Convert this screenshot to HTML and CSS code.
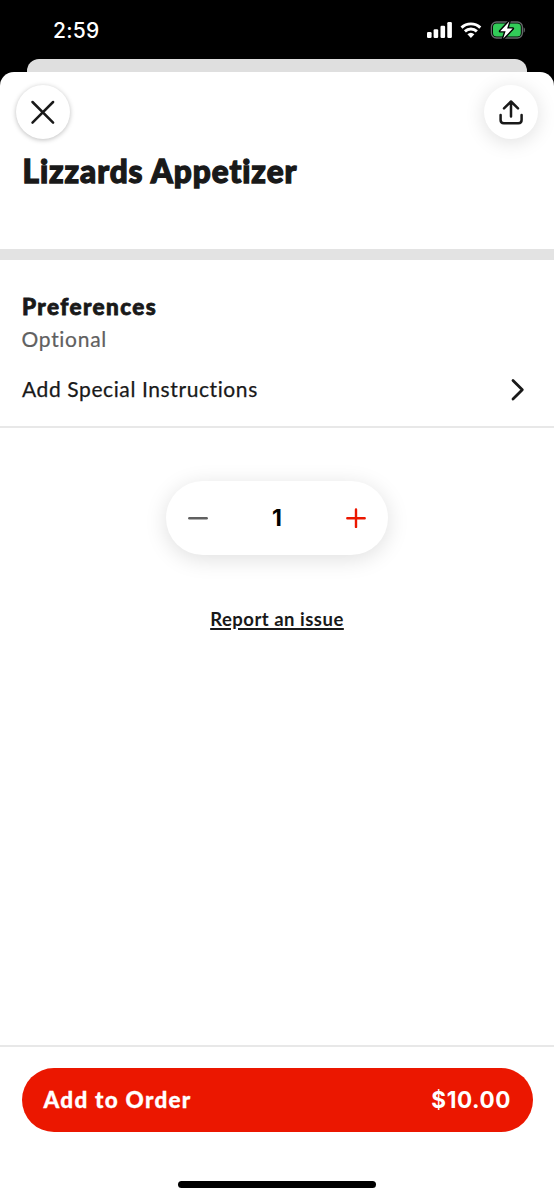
FILE: index.html
```html
<!DOCTYPE html>
<html lang="en">
<head>
<meta charset="utf-8">
<title>Lizzards Appetizer</title>
<link rel="stylesheet" href="styles.css">
</head>
<body>
<div class="screen">
  <header class="status">
    <span class="time">2:59</span>
    <svg class="status-icons" width="98" height="20" viewBox="0 0 98 20">
      <g fill="#fff">
        <rect x="0" y="11" width="4.6" height="6" rx="1.2"/>
        <rect x="6.6" y="8.2" width="4.6" height="8.8" rx="1.2"/>
        <rect x="13.5" y="4.8" width="4.6" height="12.2" rx="1.2"/>
        <rect x="20.3" y="1" width="4.6" height="16" rx="1.2"/>
      </g>
      <g fill="none" stroke="#fff" stroke-width="2.9">
        <path d="M34.5 6.6a13.6 13.6 0 0 1 18.8 0"/>
        <path d="M37.9 10.4a8.8 8.8 0 0 1 12 0"/>
      </g>
      <path d="M40.4 13.3a5.2 5.2 0 0 1 7 0l-3.5 3.6z" fill="#fff"/>
      <rect x="64.4" y="1" width="31" height="16" rx="5" fill="none" stroke="#65696b" stroke-width="1.3"/>
      <path d="M96.6 6.3c1.7.6 1.7 4.8 0 5.4z" fill="#65696b"/>
      <rect x="66" y="2.6" width="27.8" height="12.8" rx="3.5" fill="#32cb58"/>
      <path d="M82.3.4 73.2 10.2h5.4l-2.4 7.4 9.5-10h-5.6z" fill="#fff" stroke="#000" stroke-width="2.8" paint-order="stroke" stroke-linejoin="round"/>
    </svg>
  </header>
  <div class="back-card"></div>
  <main class="sheet">
    <div class="toolbar">
      <button class="round close" aria-label="Close">
        <svg width="26" height="26" viewBox="0 0 26 26"><path d="M2.5 3l20.6 20.6M23.1 3l-20.6 20.6"/></svg>
      </button>
      <button class="round share" aria-label="Share">
        <svg width="26" height="26" viewBox="0 0 26 26"><path d="M13 17.6V3M6 9.3l7-6.8 7 6.8M2.6 15.9v5.1q0 3.2 3.2 3.2h14.6q3.2 0 3.2-3.2v-5.1"/></svg>
      </button>
    </div>
    <h1 class="title">Lizzards Appetizer</h1>
    <div class="band"></div>
    <section class="prefs">
      <h2 class="prefs-title">Preferences</h2>
      <p class="optional">Optional</p>
      <div class="row">
        <span class="instructions">Add Special Instructions</span>
        <svg class="chevron" width="14" height="24" viewBox="0 0 14 24"><path d="M2 3.6l9.3 9.2L2 22"/></svg>
      </div>
    </section>
    <div class="stepper">
      <svg class="minus" width="20" height="20" viewBox="0 0 20 20"><path d="M1.3 10.2h17.4"/></svg>
      <span class="count">1</span>
      <svg class="plus" width="20" height="20" viewBox="0 0 20 20"><path d="M1.3 10.2h17.4M10 1.5v17.4"/></svg>
    </div>
    <a class="report">Report an issue</a>
    <footer class="footer">
      <button class="order"><span class="order-label">Add to Order</span><span class="price">$10.00</span></button>
      <div class="home"></div>
    </footer>
  </main>
</div>
</body>
</html>
```
FILE: styles.css
```css
* { box-sizing: border-box; margin: 0; padding: 0; }
body { background: #000; font-family: Lato, sans-serif; font-variant-ligatures: none; color: #191919; }
button { border: 0; font: inherit; color: inherit; }
svg { display: block; flex: none; }
.screen { width: 554px; height: 1199px; display: flex; flex-direction: column; overflow: hidden; }
.status { height: 59px; padding: 19px 29.5px 0 53px; display: flex; justify-content: space-between; color: #fff; }
.time { font: 500 21px/24px Inter, sans-serif; letter-spacing: .25px; }
.status-icons { margin-top: 2px; }
.back-card { height: 13px; margin: 0 27px; background: #dfdfdf; border-radius: 12px 12px 0 0; }
.sheet { flex: 1; display: flex; flex-direction: column; background: #fff; border-radius: 14px 14px 0 0; }
.toolbar { height: 78px; padding: 13px 16px 0; display: flex; justify-content: space-between; }
.round { width: 54px; height: 54px; border-radius: 50%; background: #fff; display: grid; place-items: center; }
.round path { fill: none; stroke: #191919; stroke-width: 2.5; stroke-linecap: round; stroke-linejoin: round; }
.close { box-shadow: 0 1px 5px rgba(0, 0, 0, .26); }
.share { box-shadow: 0 3px 20px rgba(0, 0, 0, .13); }
.title { height: 99px; padding-left: 22.5px; font-size: 31.5px; font-weight: 900; line-height: 42px; letter-spacing: .95px; -webkit-text-stroke: 1.3px #191919; }
.band { height: 11px; background: #e3e3e3; }
.prefs { padding-top: 30px; border-bottom: 2px solid #e8e8e8; }
.prefs-title { padding-left: 22px; font-size: 22.5px; font-weight: 900; line-height: 33px; letter-spacing: 1.4px; -webkit-text-stroke: .8px #191919; }
.optional { padding-left: 21.5px; font-size: 21px; line-height: 32px; letter-spacing: .7px; color: #606060; -webkit-text-stroke: .2px #606060; }
.row { height: 71px; padding: 4px 29px 7px 22px; display: flex; align-items: center; justify-content: space-between; line-height: 60px; }
.instructions { font-size: 21px; letter-spacing: .6px; -webkit-text-stroke: .25px #191919; }
.chevron path { fill: none; stroke: #191919; stroke-width: 2.8; stroke-linecap: round; stroke-linejoin: round; }
.stepper { width: 222px; height: 74px; margin: 53px auto 0; padding: 0 22px; border-radius: 37px; display: flex; align-items: center; justify-content: space-between; box-shadow: 0 4px 22px rgba(0, 0, 0, .13); }
.stepper path { fill: none; stroke-width: 2.4; stroke-linecap: round; }
.minus path { stroke: #606060; }
.plus path { stroke: #eb1700; }
.count { font: 700 23px/28px Inter, sans-serif; color: #000; }
.report { align-self: center; margin-top: 52px; font-size: 18.5px; font-weight: 700; line-height: 24px; letter-spacing: .5px; text-decoration: underline; text-decoration-thickness: 2px; text-underline-offset: 2px; }
.footer { margin-top: auto; height: 154px; padding: 21px 21.5px 0; border-top: 2px solid #e8e8e8; }
.order { width: 100%; height: 64px; padding: 0 22px; border-radius: 32px; background: #eb1700; color: #fff; display: flex; align-items: center; justify-content: space-between; font-size: 22.5px; font-weight: 900; }
.order-label { letter-spacing: 1.25px; -webkit-text-stroke: .3px #fff; }
.price { font-family: Inter, sans-serif; font-weight: 700; letter-spacing: .6px; margin-right: -.6px; }
.order span { margin-bottom: 2px; }
.home { width: 198px; height: 7px; margin: 49px auto 0; border-radius: 4px; background: #000; }
```
